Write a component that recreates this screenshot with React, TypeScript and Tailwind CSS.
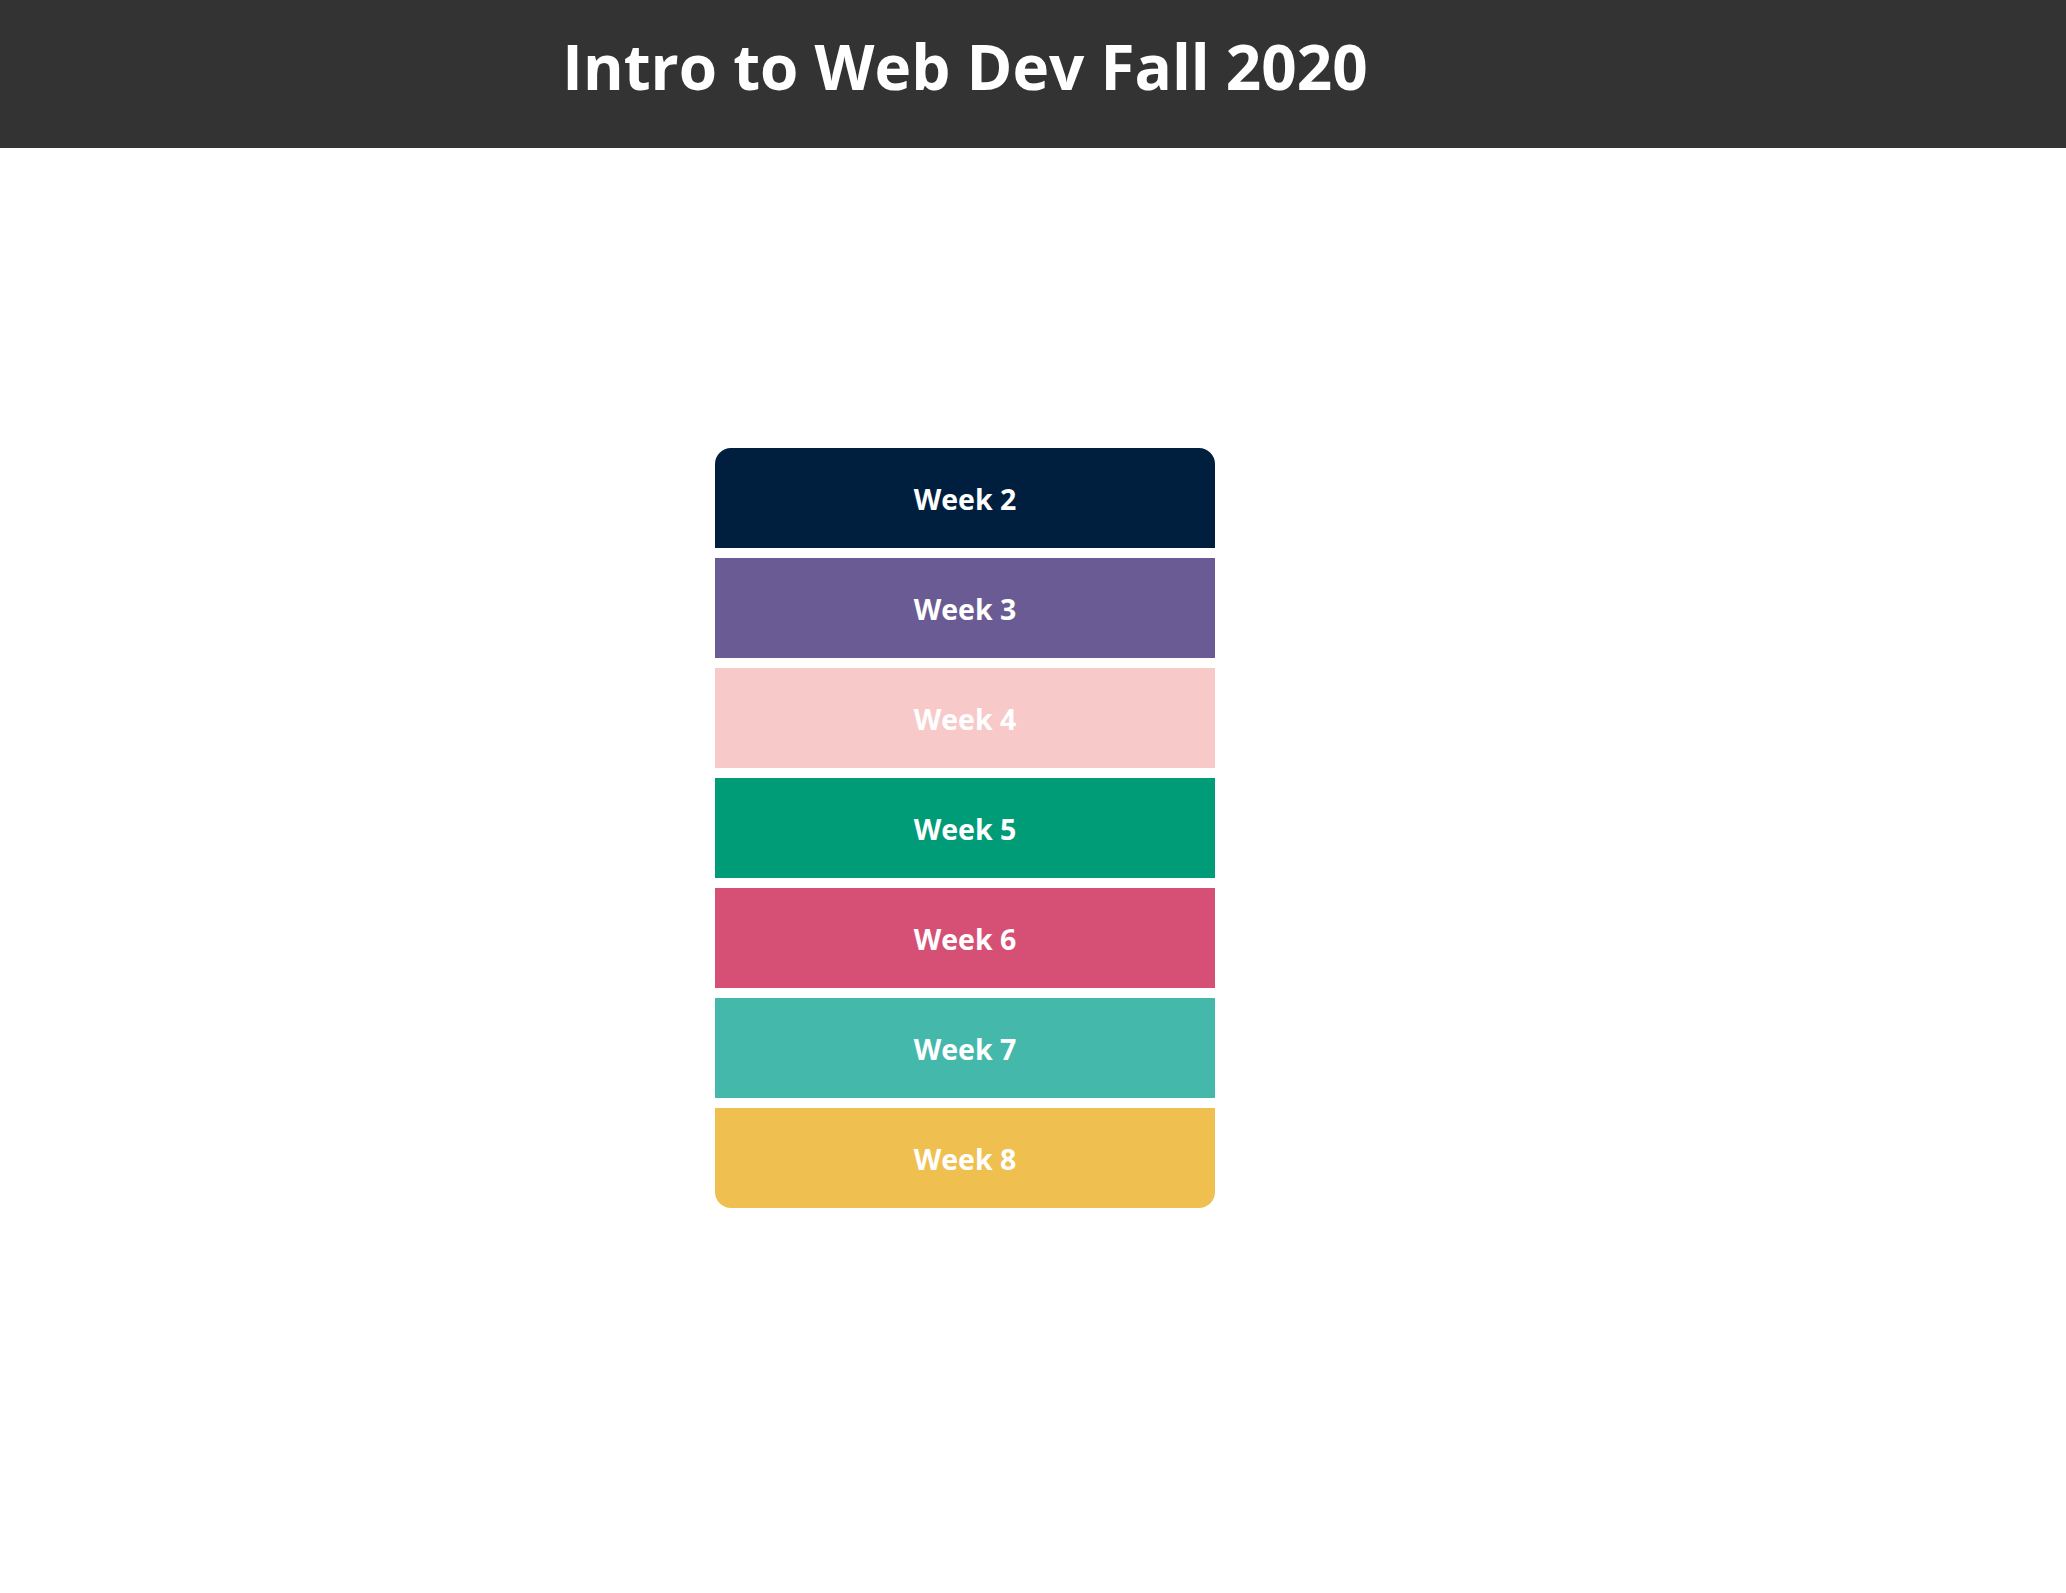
const WEEKS = [
  { label: "Week 2", bg: "bg-[#001f3f]", round: "rounded-t-2xl" },
  { label: "Week 3", bg: "bg-[#6b5b95]", round: "" },
  { label: "Week 4", bg: "bg-[#f7cac9]", round: "" },
  { label: "Week 5", bg: "bg-[#009b77]", round: "" },
  { label: "Week 6", bg: "bg-[#d65076]", round: "" },
  { label: "Week 7", bg: "bg-[#45b8ac]", round: "" },
  { label: "Week 8", bg: "bg-[#efc050]", round: "rounded-b-2xl" },
];

export default function App() {
  return (
    <div className="min-h-screen bg-white font-['Open_Sans',sans-serif]">
      {/* Header */}
      <header className="h-[148px] bg-[#333333]">
        <div className="flex h-full w-[1930px] items-start justify-center pt-[24px]">
          <h1 className="text-[62px] font-bold leading-[84px] text-white">
            Intro to Web Dev Fall 2020
          </h1>
        </div>
      </header>

      {/* Week list */}
      <main className="flex w-[1930px] justify-center pt-[300px] pb-20">
        <ul className="flex w-[500px] flex-col gap-[10px]">
          {WEEKS.map((w) => (
            <li key={w.label}>
              <a
                href="#"
                className={`flex h-[100px] items-center justify-center pt-[2px] text-[28.5px] font-bold text-white ${w.bg} ${w.round}`}
              >
                {w.label}
              </a>
            </li>
          ))}
        </ul>
      </main>
    </div>
  );
}
